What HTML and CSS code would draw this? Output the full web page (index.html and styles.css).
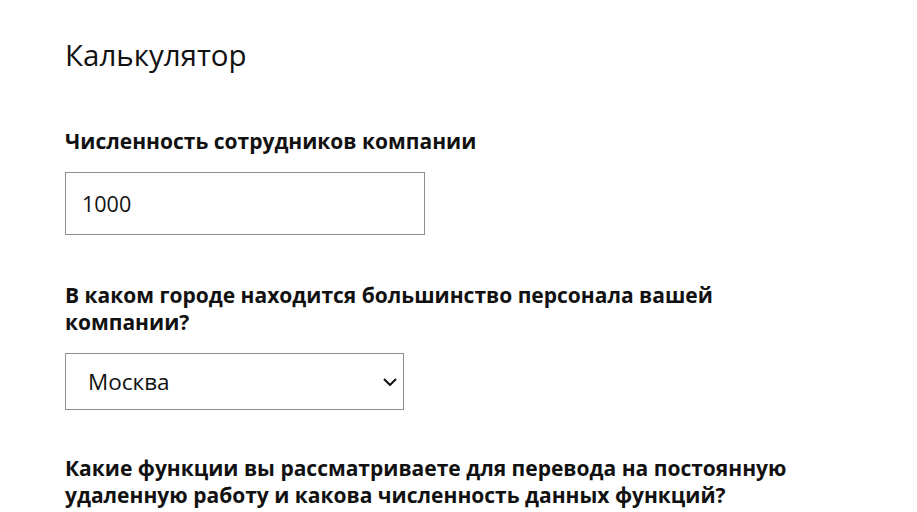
FILE: index.html
```html
<!DOCTYPE html>
<html lang="ru">
<head>
  <meta charset="UTF-8" />
  <meta name="viewport" content="width=device-width, initial-scale=1.0"/>
  <title>Калькулятор</title>
  <link rel="stylesheet" href="styles.css">
</head>
<body>
  <div class="container">
    <h1>Калькулятор</h1>

    <form id="calcForm">
      <label for="staff">Численность сотрудников компании</label>
      <input type="text" id="staff" class="staff-input" value="1000" />

      <label for="city">В каком городе находится большинство персонала вашей компании?</label>
      <div class="select-wrap">
        <select id="city">
          <option>Москва</option>
          <option>Санкт-Петербург</option>
          <option>Новосибирск</option>
          <option>Екатеринбург</option>
        </select>
        <svg class="chevron" width="14" height="8" viewBox="0 0 14 8">
          <path d="M1 1 L7 7 L13 1" fill="none" stroke="#111" stroke-width="2"/>
        </svg>
      </div>

      <label>Какие функции вы рассматриваете для перевода на постоянную удаленную работу и какова численность данных функций?</label>
    </form>
  </div>
</body>
</html>
```

FILE: styles.css
```css
body {
  font-family: 'Open Sans', sans-serif;
  margin: 0;
  padding: 0;
  background-color: #fff;
  color: #111;
}

.container {
  width: 750px;
  padding: 35px 0 0 65px;
}

h1 {
  font-size: 29.5px;
  font-weight: 400;
  margin: 0 0 53px;
  line-height: 40px;
}

label {
  display: block;
  font-weight: 700;
  font-size: 21px;
  line-height: 27px;
  margin-bottom: 17px;
}

input, select {
  font-family: 'Open Sans', sans-serif;
  color: #111;
  border: 1px solid #8f8f8f;
  border-radius: 0;
  background-color: #fff;
  outline: none;
  box-sizing: border-box;
}

.staff-input {
  display: block;
  width: 360px;
  height: 63px;
  padding: 0 16px;
  font-size: 21.5px;
  margin-bottom: 47px;
}

.select-wrap {
  position: relative;
  width: 339px;
  margin-bottom: 45px;
}

select {
  display: block;
  -webkit-appearance: none;
  appearance: none;
  width: 339px;
  height: 57px;
  padding: 0 22px;
  font-size: 22.5px;
}

.chevron {
  position: absolute;
  right: 7px;
  top: 25px;
  pointer-events: none;
}
```
